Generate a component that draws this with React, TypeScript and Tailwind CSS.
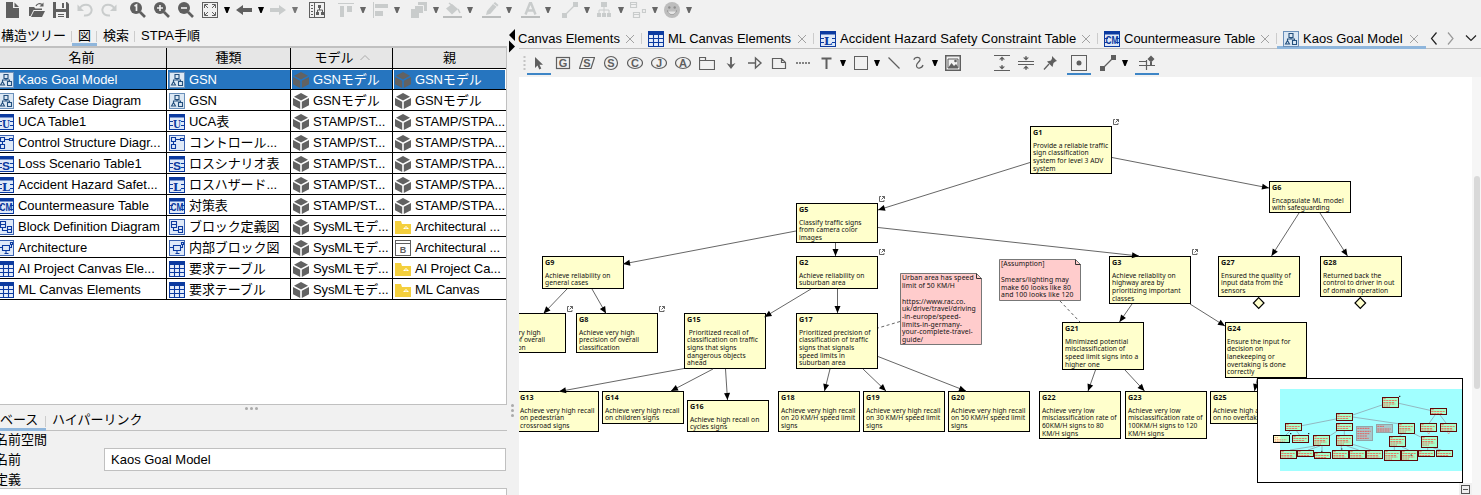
import React from "react";

const ICON = "#5f5f5f";
const OFF = "#c9cccc";
const BLUE = "#0b3aa0";

function Svg({ w = 16, h = 16, cls = "", children }: { w?: number; h?: number; cls?: string; children: React.ReactNode }) {
  return (
    <svg width={w} height={h} viewBox={`0 0 ${w} ${h}`} fill="none" className={`block shrink-0 ${cls}`}>
      {children}
    </svg>
  );
}

function Caret({ cls = "ml-1.5", color = "#666" }: { cls?: string; color?: string }) {
  return (
    <Svg w={6} h={16} cls={cls}>
      <path d="M0 5h6L3.6 11H2.4Z" fill={color} />
    </Svg>
  );
}

function Magnifier({ cls, children }: { cls: string; children: React.ReactNode }) {
  return (
    <Svg cls={cls}>
      <circle cx="6" cy="6" r="6" fill={ICON} />
      <path d="M10 10l5 5" stroke={ICON} strokeWidth="2.6" />
      {children}
    </Svg>
  );
}

function MainToolbar() {
  return (
    <div className="flex h-[23px] shrink-0 items-start pt-[2px]">
      <Svg cls="ml-[5px]">
        <path d="M1 0h7v6h6v10H1Z" fill={ICON} />
        <path d="M9.500 0.500L14 5H9.500Z" fill={ICON} />
      </Svg>
      <Svg cls="ml-2">
        <path d="M0 14V5h5l1.500 1.500H13V8H4.500L1.500 14Z" fill={ICON} />
        <path d="M5 9h11l-3 6H2Z" fill={ICON} />
        <path d="M7 4c1-2.500 4-3 6-1.500" stroke={ICON} strokeWidth="1.200" />
        <path d="M14.500 0.500V4.500H10.500Z" fill={ICON} />
      </Svg>
      <Svg cls="ml-2">
        <path d="M0 0h14l2 2v14H0Z" fill={ICON} />
        <path d="M3 0h10v7H3ZM3 10h10v6H3Z" fill="#f1f1f1" />
        <path d="M9 1h2v5H9ZM5 12h6v1H5ZM5 14h6v1H5Z" fill={ICON} />
      </Svg>
      <Svg cls="ml-2">
        <path d="M3 6C5 2 13 1 14.500 7c1 5-4 7-7.500 6.500" stroke={OFF} strokeWidth="2" />
        <path d="M0.500 2.500V9H7Z" fill={OFF} />
      </Svg>
      <Svg cls="ml-2">
        <path d="M13 6C11 2 3 1 1.500 7c-1 5 4 7 7.500 6.500" stroke={OFF} strokeWidth="2" />
        <path d="M15.500 2.500V9H9Z" fill={OFF} />
      </Svg>
      <Magnifier cls="ml-[13px]">
        <path d="M4.500 4L6.500 3v6" stroke="#f1f1f1" strokeWidth="1.700" />
      </Magnifier>
      <Magnifier cls="ml-2">
        <path d="M3 6h6M6 3v6" stroke="#f1f1f1" strokeWidth="1.600" />
      </Magnifier>
      <Magnifier cls="ml-2">
        <path d="M3 6h6" stroke="#f1f1f1" strokeWidth="1.600" />
      </Magnifier>
      <Svg cls="ml-2">
        <rect x="0.500" y="0.500" width="15" height="15" stroke={ICON} />
        <path d="M2.500 6V2.500H6M10 2.500h3.500V6M13.500 10v3.500H10M6 13.500H2.500V10M3 3l3 3M13 3l-3 3M13 13l-3-3M3 13l3-3" stroke={ICON} />
      </Svg>
      <Caret color="#000" />
      <Svg cls="ml-1.5">
        <path d="M0 8l7-5v3h9v4H7v3Z" fill={ICON} />
      </Svg>
      <Caret color="#000" />
      <Svg cls="ml-1.5">
        <path d="M16 8L9 3v3H0v4h9v3Z" fill={OFF} />
      </Svg>
      <Caret color="#777" />
      <Svg cls="ml-[11px]">
        <rect x="0.500" y="0.500" width="15" height="15" stroke={ICON} />
        <path d="M5.500 1v15" stroke={ICON} />
        <path d="M2 3.500h2M2 6.500h2M2 9.500h2M2 12.500h2" stroke={ICON} />
        <path d="M9 3h3v3H9ZM7 10h3v3H7ZM12 10h3v3h-3Z" fill={ICON} />
        <path d="M10.500 6v2M8.500 10V8h5v2" stroke={ICON} />
      </Svg>
      <Svg cls="ml-[13px]">
        <path d="M0 1h16v1H0ZM2 4h4v11H2ZM9 4h5v6H9Z" fill={OFF} />
      </Svg>
      <Caret />
      <Svg cls="ml-[7px]">
        <path d="M0 0h1v16H0ZM2 2h13v4H2ZM2 9h8v5H2Z" fill={OFF} />
      </Svg>
      <Caret cls="ml-[5px]" />
      <Svg cls="ml-[11px]">
        <path d="M7 0h9v9H7Z" fill={OFF} />
        <path d="M3.500 3.500h9v8h-9Z" fill={OFF} stroke="#f1f1f1" />
        <path d="M0 7h8v9H0Z" fill={OFF} />
      </Svg>
      <Caret />
      <Svg w={19} cls="ml-1">
        <path d="M3 6.500L9 2l6 5-6 5.500Z" fill={OFF} />
        <path d="M6 1l5 4M15 7l2 4" stroke={OFF} strokeWidth="1.600" />
        <path d="M0 14h19v2H0Z" fill="#bbbdbd" />
      </Svg>
      <Caret cls="ml-[5px]" />
      <Svg w={19} cls="ml-[9px]">
        <path d="M4 13l1-4 6-7 3.500 2.800-6 7Z" fill={OFF} />
        <path d="M11.500 1.500L13 0l3.500 3-1.200 1.500Z" fill={OFF} />
        <path d="M0 14h19v2H0Z" fill="#bbbdbd" />
      </Svg>
      <Caret cls="ml-[5px]" />
      <Svg w={19} cls="ml-[9px]">
        <path d="M4.500 12.500L9 1h1l4.500 11.500M6 8.500h7" stroke={OFF} strokeWidth="2.400" />
        <path d="M0 14h19v2H0Z" fill="#bbbdbd" />
      </Svg>
      <Caret cls="ml-[5px]" />
      <Svg cls="ml-[11px]">
        <path d="M11 0h5v5h-5ZM0 11h5v5H0Z" fill={OFF} />
        <path d="M3 13L13 3" stroke={OFF} strokeWidth="1.300" />
      </Svg>
      <Caret />
      <Svg cls="ml-1.5">
        <path d="M5 0h6v5H5ZM1 11h4v4H1ZM6 11h4v4H6ZM11 11h4v4h-4Z" fill={OFF} />
        <path d="M8 5v6M3 11V8h10v3" stroke={OFF} />
      </Svg>
      <Caret />
      <Svg cls="ml-1.5">
        <path d="M0.500 0.500h6v5h-6ZM0.500 2.500h6M3.500 10.500h6v5h-6ZM3.500 12.500h6M12.500 7.500h3v3h-3Z" stroke={OFF} strokeWidth="1.200" />
      </Svg>
      <Caret />
      <Svg cls="ml-1.5">
        <circle cx="8" cy="8" r="8" fill="#bdbdbd" />
        <path d="M3.500 8.500c1 5 8 5 9 0" stroke="#8e8e8e" />
        <path d="M4 9.500c1.500 3.500 6.500 3.500 8 0Z" fill="#e6e6e6" />
        <circle cx="5.300" cy="5.500" r="1.200" fill="#8e8e8e" />
        <circle cx="10.700" cy="5.500" r="1.200" fill="#8e8e8e" />
      </Svg>
      <Caret />
    </div>
  );
}

type Kind = "gsn" | "U" | "S" | "L" | "CM" | "ctrl" | "bdd" | "ibd" | "grid" | "cube" | "folder" | "block";

function TypeIcon({ kind }: { kind: Kind }) {
  if (kind === "gsn")
    return (
      <Svg>
        <rect x="0.500" y="0.500" width="15" height="15" fill="#dce8f4" stroke="#6b90ba" />
        <path d="M6 2.500h4v4H6ZM2.500 13l2-3.500 2 3.500ZM9.500 9.500h4v4h-4ZM8 6.500v1.500M4.500 9.500V8h7v1.500" stroke="#234f7d" strokeWidth="1.100" />
      </Svg>
    );
  if (kind === "U" || kind === "S" || kind === "L" || kind === "CM")
    return (
      <Svg>
        <rect width="16" height="16" fill="#dfe9f8" />
        <path d="M0 0h16v3.500H0Z" fill={BLUE} />
        <path d="M0.500 0v16M15.500 0v16M0 15.500h16M1 7.500h3M12 7.500h3M1 11.500h3M12 11.500h3" stroke={BLUE} />
        {kind === "CM" ? (
          <text x="1.500" y="13" fill={BLUE} fontSize="10" textLength="13" lengthAdjust="spacingAndGlyphs" fontWeight="bold" fontFamily="Liberation Sans">
            CM
          </text>
        ) : (
          <text x="8" y="13.500" textAnchor="middle" fill={BLUE} fontSize="10.500" textLength="8" lengthAdjust="spacingAndGlyphs" fontWeight="bold" fontFamily={kind === "S" ? "Liberation Sans" : "DejaVu Serif"}>
            {kind}
          </text>
        )}
      </Svg>
    );
  if (kind === "ctrl")
    return (
      <Svg>
        <rect x="0.500" y="0.500" width="15" height="15" fill="#dfe9f8" stroke="#3b62b0" />
        <path d="M2.500 2.500h4v4h-4ZM11.500 3.500h3v2h-3ZM2.500 9.500h4v4h-4ZM6.500 4.500h5M4.500 6.500v3" stroke={BLUE} strokeWidth="1.100" />
      </Svg>
    );
  if (kind === "bdd")
    return (
      <Svg>
        <rect x="0.500" y="0.500" width="15" height="15" fill="#dfe9f8" stroke="#3b62b0" />
        <path d="M2.500 2.500h5v6h-5ZM2.500 5.500h5M9.500 7.500h4v6h-4ZM9.500 10.500h4M4.500 8.500v3h5" stroke={BLUE} strokeWidth="1.100" />
      </Svg>
    );
  if (kind === "ibd")
    return (
      <Svg>
        <rect x="0.500" y="0.500" width="15" height="15" fill="#dfe9f8" stroke="#3b62b0" />
        <path d="M4.500 5.500h7v5h-7ZM1 7.500h3.500M11.500 7.500h2V4M12.500 2.500h2v2h-2ZM8 10.500v3M6.500 13.500h4" stroke={BLUE} strokeWidth="1.100" />
      </Svg>
    );
  if (kind === "grid")
    return (
      <Svg>
        <rect width="16" height="16" fill="#e6eefb" />
        <path d="M0 0h16v4H0Z" fill={BLUE} />
        <path d="M0.500 0v16M5.500 4v12M10.500 4v12M15.500 0v16M0 7.500h16M0 11.500h16M0 15.500h16" stroke={BLUE} strokeWidth="1.100" />
      </Svg>
    );
  if (kind === "cube")
    return (
      <Svg>
        <path d="M8 0l7 3.700L8 7.400 1 3.700ZM0 5l7.200 3.700V16L0 12.200ZM16 5L8.800 8.700V16L16 12.200Z" fill="#626262" />
      </Svg>
    );
  if (kind === "folder")
    return (
      <Svg>
        <path d="M0 2h6l1 3h9v10H0Z" fill="#f4cf3c" />
        <path d="M8 10l3-3 3 3Z" fill="#fff" />
        <path d="M9.800 9.200h2.400L11 8Z" fill="#f4cf3c" />
      </Svg>
    );
  return (
    <Svg>
      <rect x="0.500" y="0.500" width="15" height="15" fill="#fff" stroke={ICON} />
      <path d="M0 3.500h16" stroke={ICON} />
      <text x="8" y="13" textAnchor="middle" fill={ICON} fontSize="9" fontWeight="bold" fontFamily="Liberation Sans">B</text>
    </Svg>
  );
}

const rows: [Kind, string, string, string, Kind, string][] = [
  ["gsn", "Kaos Goal Model", "GSN", "GSNモデル", "cube", "GSNモデル"],
  ["gsn", "Safety Case Diagram", "GSN", "GSNモデル", "cube", "GSNモデル"],
  ["U", "UCA Table1", "UCA表", "STAMP/ST...", "cube", "STAMP/STPA..."],
  ["ctrl", "Control Structure Diagr...", "コントロール...", "STAMP/ST...", "cube", "STAMP/STPA..."],
  ["S", "Loss Scenario Table1", "ロスシナリオ表", "STAMP/ST...", "cube", "STAMP/STPA..."],
  ["L", "Accident Hazard Safet...", "ロスハザード...", "STAMP/ST...", "cube", "STAMP/STPA..."],
  ["CM", "Countermeasure Table", "対策表", "STAMP/ST...", "cube", "STAMP/STPA..."],
  ["bdd", "Block Definition Diagram", "ブロック定義図", "SysMLモデ...", "folder", "Architectural ..."],
  ["ibd", "Architecture", "内部ブロック図", "SysMLモデ...", "block", "Architectural ..."],
  ["grid", "AI Project Canvas Ele...", "要求テーブル", "SysMLモデ...", "folder", "AI Project Ca..."],
  ["grid", "ML Canvas Elements", "要求テーブル", "SysMLモデ...", "folder", "ML Canvas"],
];

function Cell({ icon, text, selected, first }: { icon: Kind; text: string; selected: boolean; first?: boolean }) {
  return (
    <div className={`flex min-w-0 pt-px ${first ? "" : "pl-px"}`}>
      <div className={`flex min-w-0 flex-1 items-center gap-1 ${selected ? "bg-[#2675bf] text-white" : ""}`}>
        <div className={`shrink-0 ${first ? "-ml-[2px]" : "ml-px"}`}>
          <TypeIcon kind={icon} />
        </div>
        <span className={`leading-[18px] whitespace-nowrap ${first ? "tracking-[-0.02px]" : "tracking-[-0.1px]"}`}>{text}</span>
      </div>
    </div>
  );
}

const GRID = "grid shrink-0 grid-cols-[166px_123px_101px_113px] gap-x-px";

function Divider({ cls = "" }: { cls?: string }) {
  return <span className={`h-[11px] w-px shrink-0 bg-[#ccc] ${cls}`} />;
}

function LeftPanel() {
  return (
    <div className="flex w-[507px] shrink-0 flex-col">
      <div className="flex h-[24px] shrink-0 items-stretch border-b border-[#c0c0c0]">
        <span className="w-[71px] pt-[4px] pl-px leading-[18px] whitespace-nowrap">構造ツリー</span>
        <Divider cls="mt-[8px]" />
        <span className="flex w-[25px] justify-center border-b-[3px] border-[#8fb6dc] pt-[4px] leading-[18px]">図</span>
        <Divider cls="-ml-px mt-[8px]" />
        <span className="pt-[4px] pl-[6px] leading-[18px]">検索</span>
        <Divider cls="mt-[8px] ml-[5px]" />
        <span className="pt-[4px] pl-[6px] leading-[18px]">STPA手順</span>
      </div>
      <div className="flex h-[358px] shrink-0 flex-col border-t border-r border-b border-[#c0c0c0] bg-white">
        <div className={`${GRID} h-[21px] border-b border-black bg-black text-center leading-[20px]`}>
          <div className="bg-[#e6e6e6] pr-[3px]">名前</div>
          <div className="bg-[#e6e6e6]">種類</div>
          <div className="flex items-center justify-center gap-1.5 bg-[#e6e6e6] pl-px">
            モデル
            <Svg w={10} h={10}>
              <path d="M0.500 7L5 2.500 9.500 7" stroke="#aaa" />
            </Svg>
          </div>
          <div className="bg-[#e6e6e6]">親</div>
        </div>
        {rows.map(([kind, name, type, model, pkind, parent], i) => (
          <div key={name} className={`${GRID} h-[21px] border-b border-black bg-black`}>
            <div className="grid bg-white"><Cell first icon={kind} text={name} selected={i === 0} /></div>
            <div className="grid bg-white"><Cell icon={kind} text={type} selected={i === 0} /></div>
            <div className="grid bg-white"><Cell icon="cube" text={model} selected={i === 0} /></div>
            <div className="grid bg-white pr-px"><Cell icon={pkind} text={parent} selected={i === 0} /></div>
          </div>
        ))}
      </div>
      <div className="flex h-[7px] shrink-0 items-center justify-center gap-[2px] pr-[5px]">
        <span className="size-[3px] rounded-full bg-[#aaa]" />
        <span className="size-[3px] rounded-full bg-[#aaa]" />
        <span className="size-[3px] rounded-full bg-[#aaa]" />
      </div>
      <div className="flex h-[19px] shrink-0 border-b border-[#c0c0c0]">
        <span className="-mb-px flex w-[46px] justify-between border-b-[3px] border-[#8fb6dc] leading-[16px] whitespace-nowrap">
          ベース
          <Divider cls="mt-[4px]" />
        </span>
        <span className="pl-[6px] leading-[16px]">ハイパーリンク</span>
      </div>
      <div className="flex flex-1 flex-col">
        <span className="-ml-[5px] h-[17px] pt-px leading-[16px]">名前空間</span>
        <div className="flex h-[23px] items-center">
          <span className="-ml-[5px] w-[109px]">名前</span>
          <div className="mr-[1px] flex h-[23px] flex-1 items-center border border-[#c0c0c0] bg-white pl-[6px]">Kaos Goal Model</div>
        </div>
        <span className="-ml-[5px] h-[17px] pt-px leading-[16px]">定義</span>
        <div className="flex-1 border-t border-r border-[#c0c0c0] bg-white" />
      </div>
    </div>
  );
}

function Close() {
  return (
    <Svg w={8} h={8} cls="ml-[6px]">
      <path d="M0 0l8 8M8 0L0 8" stroke="#999" strokeWidth="0.900" />
    </Svg>
  );
}

function Tab({ icon, label, width }: { icon: Kind; label: string; width: string }) {
  return (
    <>
      <Divider cls="ml-[7px]" />
      <div className="ml-[6px] shrink-0"><TypeIcon kind={icon} /></div>
      <span className={`ml-1 shrink-0 whitespace-nowrap ${width}`}>{label}</span>
      <Close />
    </>
  );
}

function DocTabs() {
  return (
    <div className="flex h-[26px] shrink-0 border-b border-[#c0c0c0]">
      <div className="flex w-[758px] shrink-0 items-center pt-[6px]">
        <span className="-ml-px w-[102px] shrink-0 whitespace-nowrap">Canvas Elements</span>
        <Close />
        <Tab icon="grid" label="ML Canvas Elements" width="w-[124px]" />
        <Tab icon="L" label="Accident Hazard Safety Constraint Table" width="w-[236px] tracking-[0.08px]" />
        <Tab icon="CM" label="Countermeasure Table" width="w-[131px]" />
        <Divider cls="ml-[7px]" />
      </div>
      <div className="-mb-px flex w-[149px] items-center border-b-[3px] border-[#8fb6dc] pt-[8px] pl-[6px]">
        <TypeIcon kind="gsn" />
        <span className="ml-1 w-[101px] shrink-0 whitespace-nowrap">Kaos Goal Model</span>
        <Close />
      </div>
      <Svg w={50} h={16} cls="mt-[8px] ml-[4px]">
        <path d="M6.500 1.500L1.500 7.500l5 6M36 4.500l5 5 5-5" stroke="#222" strokeWidth="1.200" />
        <path d="M18 1.500l5 6-5 6" stroke="#999" strokeWidth="1.200" />
      </Svg>
    </div>
  );
}

function Glyph({ x = 8, children }: { x?: number; children: string }) {
  return (
    <text x={x} y="12" textAnchor="middle" fill={ICON} fontSize="11" fontWeight="bold" fontFamily="Liberation Sans">
      {children}
    </text>
  );
}

function DiagramToolbar() {
  return (
    <div className="flex h-[28px] shrink-0 items-start pt-[6px]">
      <Svg w={3} cls="ml-[4px]">
        <path d="M1.500 1v15" stroke="#c4c4c4" strokeWidth="2" strokeDasharray="2 2" />
      </Svg>
      <div className="ml-px flex h-[20px] w-6 justify-center border-b-2 border-[#3d85c6]">
        <Svg>
          <path d="M4 2v11l2.500-2.500 1.800 4 2-1-1.800-3.800H12Z" fill={ICON} />
        </Svg>
      </div>
      <Svg cls="ml-[4px]"><rect x="1.500" y="2.500" width="13" height="11" stroke={ICON} strokeWidth="1.200" /><Glyph>G</Glyph></Svg>
      <Svg cls="ml-[8px]"><path d="M4 2.500h11.500L12 13.500H0.500Z" stroke={ICON} strokeWidth="1.200" /><Glyph>S</Glyph></Svg>
      <Svg cls="ml-[8px]"><circle cx="8" cy="8" r="6.500" stroke={ICON} strokeWidth="1.200" /><Glyph>S</Glyph></Svg>
      <Svg cls="ml-[8px]"><ellipse cx="8" cy="8" rx="7.500" ry="5.500" stroke={ICON} strokeWidth="1.200" /><Glyph>C</Glyph></Svg>
      <Svg cls="ml-[8px]"><ellipse cx="8" cy="8" rx="7.500" ry="5.500" stroke={ICON} strokeWidth="1.200" /><Glyph>J</Glyph></Svg>
      <Svg cls="ml-[8px]"><ellipse cx="8" cy="8" rx="7.500" ry="5.500" stroke={ICON} strokeWidth="1.200" /><Glyph>A</Glyph></Svg>
      <Svg cls="ml-[8px]"><path d="M0.500 14.500v-12h6v3h9v9ZM0.500 5.500h6" stroke={ICON} strokeWidth="1.200" /></Svg>
      <Svg cls="ml-[8px]"><path d="M8 2v9" stroke={ICON} strokeWidth="1.800" /><path d="M3.500 8L8 10l4.500-2L8 14Z" fill={ICON} /></Svg>
      <Svg cls="ml-[8px]"><path d="M1 8h8M8.500 3l5.500 5-5.500 5Z" stroke={ICON} strokeWidth="1.400" /></Svg>
      <Svg cls="ml-[8px]"><path d="M1.500 3.500h9l4 4v6h-13ZM10.500 3.500v4h4" stroke={ICON} strokeWidth="1.200" /></Svg>
      <Svg cls="ml-[8px]"><path d="M1 8h15" stroke={ICON} strokeWidth="1.500" strokeDasharray="2 1" /></Svg>
      <Svg cls="ml-[8px]"><path d="M2.500 3.500h10M7.500 3v11" stroke={ICON} strokeWidth="2" /></Svg>
      <Caret cls="ml-[5px]" color="#000" />
      <Svg cls="ml-[8px]"><rect x="0.500" y="1.500" width="13" height="13" stroke={ICON} /></Svg>
      <Caret cls="ml-[4px]" color="#000" />
      <Svg cls="ml-[6px]"><path d="M2.500 2.500l11 11" stroke={ICON} strokeWidth="1.200" /></Svg>
      <Svg cls="ml-[9px]"><path d="M3 5c0-3.500 7-3.500 6 0-0.500 2-3.500 3-3.500 5.500 0 4 5.500 3 6.500-0.500" stroke={ICON} strokeWidth="1.200" /></Svg>
      <Caret cls="ml-[5px]" color="#000" />
      <Svg cls="ml-[7px]">
        <rect x="0.750" y="0.750" width="14.500" height="14.500" stroke={ICON} strokeWidth="1.500" />
        <path d="M3 13V4h10v9Z" stroke={ICON} />
        <path d="M3 13l3.500-5L9 11l2-2 2 3v1Z" fill={ICON} /><circle cx="10.500" cy="6" r="1.300" fill={ICON} />
      </Svg>
      <Svg cls="ml-[33px]">
        <path d="M0 0.500h16M0 15.500h16M8 3v3M8 10v3" stroke={ICON} strokeWidth="1.200" />
        <path d="M5 4.500L8 1.500l3 3ZM5 11.500l3 3 3-3Z" fill={ICON} />
      </Svg>
      <Svg cls="ml-[8px]">
        <path d="M0 6.500h16M0 9.500h16M8 1v2M8 13v2" stroke={ICON} strokeWidth="1.200" />
        <path d="M5 2.500h6L8 5.500ZM5 13.500h6L8 10.500Z" fill={ICON} />
      </Svg>
      <Svg cls="ml-[8px]">
        <path d="M10 1l5 5-1.500 0.500-2 1.500-1 4-5.500-5.500 4-1 1-2Z" fill={ICON} />
        <path d="M7 9l-5 5.500" stroke={ICON} strokeWidth="1.300" />
      </Svg>
      <div className="ml-[9px] flex h-[20px] w-6 justify-center border-b-2 border-[#3d85c6]">
        <Svg><rect x="0.500" y="0.500" width="15" height="15" stroke={ICON} /><circle cx="8" cy="8" r="2.500" fill={ICON} /></Svg>
      </div>
      <Svg cls="ml-[9px]"><path d="M11 0h5v5h-5ZM0 11h5v5H0Z" fill={ICON} /><path d="M3 13L13 3" stroke={ICON} strokeWidth="1.300" /></Svg>
      <Caret cls="ml-[6px]" color="#000" />
      <div className="ml-[7px] flex h-[20px] w-6 justify-center border-b-2 border-[#3d85c6]">
        <Svg><path d="M0 6.500h7M0 10.500h7M7.500 5v10M8 10.500h8" stroke={ICON} strokeWidth="1.200" /><path d="M12 0.500l3.500 3.500L12 7.500 8.500 4ZM11 7h2v3h-2Z" fill={ICON} /></Svg>
      </div>
    </div>
  );
}

/* Canvas coordinates share the window origin; the viewport group is shifted by (-519, -77). */
type GoalNode = { id: string; x: number; y: number; h: number; lines: string[]; link?: boolean; dx?: number };
const nodes: GoalNode[] = [
  { id: "G1", x: 1030, y: 126, h: 48, link: true, lines: ["Provide a reliable traffic", "sign classification", "system for level 3 ADV", "system"] },
  { id: "G6", x: 1269, y: 181, h: 32, lines: ["Encapsulate ML model", "with safeguarding"] },
  { id: "G5", x: 796, y: 203, h: 40, link: true, lines: ["Classify traffic signs", "from camera color", "images"] },
  { id: "G9", x: 542, y: 256, h: 33, lines: ["Achieve reliability on", "general cases"] },
  { id: "G2", x: 796, y: 256, h: 33, link: true, lines: ["Achieve reliability on", "suburban area"] },
  { id: "G3", x: 1109, y: 256, h: 48, link: true, lines: ["Achieve reliablity on", "highway area by", "prioritizing important", "classes"] },
  { id: "G27", x: 1218, y: 256, h: 41, lines: ["Ensured the quality of", "input data from the", "sensors"] },
  { id: "G28", x: 1320, y: 256, h: 41, lines: ["Returned back the", "control to driver in out", "of domain operation"] },
  { id: "G7", x: 484, y: 313, h: 40, link: true, dx: -2, lines: ["Achieve very high", "precision of overall", "classification"] },
  { id: "G8", x: 576, y: 313, h: 40, link: true, lines: ["Achieve very high", "precision of overall", "classification"] },
  { id: "G15", x: 684, y: 313, h: 56, lines: ["\u00a0Prioritized recall of", "classification on traffic", "signs that signs", "dangerous objects", "ahead"] },
  { id: "G17", x: 796, y: 313, h: 56, lines: ["Prioritized precision of", "classification of traffic", "signs that signals", "speed limits in", "suburban area"] },
  { id: "G21", x: 1062, y: 322, h: 48, lines: ["Minimized potential", "misclassification of", "speed limit signs into a", "higher one"] },
  { id: "G24", x: 1225, y: 322, h: 56, dx: -1, lines: ["Ensure the input for", "decision on", "lanekeeping or", "overtaking is done", "correctly"] },
  { id: "G13", x: 517, y: 391, h: 41, lines: ["Achieve very high recall", "on pedestrian", "crossroad signs"] },
  { id: "G14", x: 602, y: 391, h: 33, lines: ["Achieve very high recall", "on children signs"] },
  { id: "G16", x: 687, y: 400, h: 32, lines: ["Achieve high recall on", "cycles signs"] },
  { id: "G18", x: 778, y: 391, h: 41, lines: ["Achieve very high recall", "on 20 KM/H speed limit", "signs"] },
  { id: "G19", x: 863, y: 391, h: 41, lines: ["Achieve very high recall", "on 30 KM/H speed limit", "signs"] },
  { id: "G20", x: 948, y: 391, h: 41, lines: ["Achieve very high recall", "on 50 KM/H speed limit", "signs"] },
  { id: "G22", x: 1039, y: 391, h: 48, lines: ["Achieve very low", "misclassification rate of", "60KM/H signs to 80", "KM/H signs"] },
  { id: "G23", x: 1125, y: 391, h: 48, lines: ["Achieve very low", "misclassification rate of", "100KM/H signs to 120", "KM/H signs"] },
  { id: "G25", x: 1210, y: 391, h: 33, lines: ["Achieve high accuracy", "on no overtaking"] },
];

const notes = [
  { x: 900, y: 273, h: 72, lines: ["Urban area has speed", "limit of 50 KM/H", "\u00a0", "https://www.rac.co.", "uk/drive/travel/driving", "-in-europe/speed-", "limits-in-germany-", "your-complete-travel-", "guide/"] },
  { x: 999, y: 259, h: 42, lines: ["[Assumption]", "\u00a0", "Smears/lighting may", "make 60 looks like 80", "and 100 looks like 120"] },
];

const edges = [
  [1030, 162.5, 878, 210], [1112, 157.5, 1269, 188], [796, 231, 623, 264], [835.5, 243, 835.5, 256],
  [878, 227.5, 1139, 256], [567, 289, 543.5, 313.5], [592, 289, 606, 313.5], [811, 289, 764.5, 317],
  [837.5, 289, 837.5, 313], [684, 368.5, 559, 391.5], [713, 369, 671, 391], [725.5, 369, 727.5, 400],
  [830, 369, 824.5, 391], [863, 369, 886, 391], [878, 356.5, 966, 391], [1132, 304, 1119.5, 322],
  [1190, 304, 1225, 326], [1095.5, 370, 1088, 391], [1125, 370, 1144.5, 391], [1299, 213, 1271.5, 256],
  [1320, 213, 1347.5, 256], [1257.500, 378, 1254.500, 391],
];

const mapBoxes = [
  [546, 96, 33], [408, 144, 24], [690, 129, 21], [255, 174, 24], [408, 174, 24], [594, 174, 33], [660, 174, 27], [720, 174, 27],
  [276, 210, 24], [339, 210, 33], [408, 210, 33], [567, 213, 33], [663, 213, 36], [240, 255, 27], [291, 255, 21],
  [342, 261, 21], [396, 255, 27], [447, 255, 27], [498, 255, 27], [552, 255, 33], [603, 255, 33], [654, 255, 21], [708, 255, 21],
];

function MiniMap() {
  return (
    <svg width="204" height="103" viewBox="174 42 612 309" className="block">
      <rect x="240" y="72" width="547" height="246" fill="#a1ffff" />
      <path d="M546 120L458 150M597 115L690 136M408 162L306 182M458 156L594 176M705 150L688 174M720 150L738 174M270 198l-14 14M290 198l10 14M412 198l-22 14M433 198v12M605 207l-8 8M640 205l24 12M345 243l-75 12M360 243l-36 12M366 243v18M424 243v12M440 243l36 12M458 238l56 17M583 246v9M606 246l20 9M683 249v6M700 249l24 6" stroke="#8fa9b4" strokeWidth="2.500" />
      <rect x="469.500" y="184.500" width="48" height="42" fill="#a7c9cc" stroke="#93a5a8" strokeWidth="3" />
      <rect x="529.500" y="178.500" width="48" height="24" fill="#a7c9cc" stroke="#93a5a8" strokeWidth="3" />
      <path d="M472 190h36M472 199h40M472 206h36M472 213h30M472 220h34M532 184h20M532 192h40M532 198h38" stroke="#e0605f" strokeWidth="3" strokeDasharray="6 1.500" />
      <rect x="220.500" y="211.500" width="48" height="21" fill="#ffffcc" stroke="#000" strokeWidth="3" />
      <rect x="241" y="213" width="26" height="18" fill="#a6ffca" />
      <path d="M224 218h10M224 224h36M224 229h30" stroke="#ef7a6a" strokeWidth="2" strokeDasharray="5 2" />
      {mapBoxes.map(([x, y, h]) => (
        <g key={`${x}-${y}`}>
          <rect x={x + 1.5} y={y + 1.5} width="48" height={h - 3} fill="#a6ffca" stroke="#5f0808" strokeWidth="3" />
          <path d={`M${x + 4} ${y + 5}h7M${x + 4} ${y + 10.5}h40M${x + 4} ${y + 16.5}h34${h > 25 ? `M${x + 4} ${y + 21}h36` : ""}${h > 30 ? `M${x + 4} ${y + 27}h20` : ""}`} stroke="#f0614f" strokeWidth="2.400" strokeDasharray="7 1.500" />
        </g>
      ))}
      <path d="M597 94h4M270 206h4M324 206h4M424 252h3M364 259h3M632 270h3" stroke="#000" strokeWidth="3" />
      <path d="M683 202l3 5 3-5M743 202l3 5 3-5" stroke="#ef7a6a" strokeWidth="2" fill="none" />
    </svg>
  );
}

function arrowHead([x1, y1, x2, y2]: number[]) {
  const len = Math.hypot(x2 - x1, y2 - y1);
  const ux = (x2 - x1) / len;
  const uy = (y2 - y1) / len;
  const bx = x2 - ux * 7;
  const by = y2 - uy * 7;
  return `${x2},${y2} ${bx - uy * 3},${by + ux * 3} ${bx + uy * 3},${by - ux * 3}`;
}

const BODY = "font-['Noto_Sans','Open_Sans',sans-serif] leading-[7.7px] whitespace-nowrap text-[#111]";

function Canvas() {
  return (
    <div className="relative flex-1 overflow-hidden bg-white">
      <div className="absolute -top-[77px] -left-[519px] h-[495px] w-[1481px]">
        {nodes.map((n) => (
          <div key={n.id} className={`absolute w-[82px] border border-black bg-[#ffffcc] text-[6.700px] tracking-[0.04px] ${BODY}`} style={{ left: n.x, top: n.y, height: n.h, paddingLeft: 2 + (n.dx ?? 0) }}>
            <div className="pt-[2px] pb-[4.900px] text-[7.200px] font-bold">{n.id}</div>
            {n.lines.map((l) => <div key={l}>{l}</div>)}
          </div>
        ))}
        {notes.map((n) => (
          <div key={n.x} className={`absolute w-[82px] text-[6.800px] tracking-[0.09px] ${BODY}`} style={{ left: n.x, top: n.y, height: n.h }}>
            <svg width="82" height={n.h} className="absolute inset-0" fill="none">
              <path d={`M0.500 0.500H76.500L81.500 5.500V${n.h - 0.5}H0.500Z`} fill="#ffcccc" stroke="#777" />
              <path d="M76.500 0.500V5.500H81.500" stroke="#333" />
            </svg>
            <div className="relative pt-[1.400px] pl-[2px]">
              {n.lines.map((l, i) => <div key={i}>{l}</div>)}
            </div>
          </div>
        ))}
        <svg width="1481" height="495" className="absolute inset-0" fill="none">
          {edges.map((e, i) => (
            <g key={i}>
              <path d={`M${e[0]} ${e[1]}L${e[2]} ${e[3]}`} stroke="#555" strokeWidth="0.900" />
              <polygon points={arrowHead(e)} fill="#000" />
            </g>
          ))}
          <path d="M900 321.500L878 328M1060 301l20 21" stroke="#555" strokeWidth="0.900" strokeDasharray="3 2.500" />
          {[1258.7, 1360.3].map((x) => (
            <path key={x} d={`M${x} 297.700l5.300 5.300-5.300 5.300-5.300-5.300Z`} fill="#ffffcc" stroke="#000" strokeWidth="1.200" />
          ))}
          {nodes.filter((n) => n.link).map((n) => (
            <path key={n.id} transform={`translate(${n.x + 83} ${n.y - 7})`} d="M2 0.500H0.500v5h4.500V4M3 0.500h2.500V3M2.500 3.500l3-3" stroke="#555" strokeWidth="0.900" />
          ))}
        </svg>
        <div className="absolute top-[378px] left-[1257px] h-[105px] w-[206px] border border-black bg-white">
          <MiniMap />
        </div>
        <div className="absolute top-[483px] left-[1459px] h-3 w-[13px] bg-[#f0f0f0]">
          <Svg w={13} h={12}>
            <rect x="2.500" y="2.500" width="8" height="8" stroke="#555" />
            <path d="M4 6.500h5" stroke="#555" />
          </Svg>
        </div>
      </div>
    </div>
  );
}

export default function App() {
  return (
    <div className="flex h-[495px] w-[1481px] flex-col overflow-hidden bg-[#f1f1f1] font-['Liberation_Sans','Noto_Sans_CJK_JP',sans-serif] text-[13px] leading-[16px] text-black">
      <MainToolbar />
      <div className="flex min-h-0 flex-1">
        <LeftPanel />
        <div className="flex w-3 shrink-0 flex-col">
          <Svg w={12} h={32}>
            <path d="M8 6v12l-6-6ZM2 17.500v12l6-6Z" fill="#000" />
          </Svg>
          <div className="mt-[349px] ml-[4px] flex flex-col gap-[2px]">
            <span className="size-[3px] rounded-full bg-[#aaa]" />
            <span className="size-[3px] rounded-full bg-[#aaa]" />
            <span className="size-[3px] rounded-full bg-[#aaa]" />
          </div>
        </div>
        <div className="flex min-w-0 flex-1 flex-col">
          <DocTabs />
          <DiagramToolbar />
          <div className="flex min-h-0 flex-1">
            <Canvas />
            <div className="flex w-[9px] shrink-0 flex-col items-center bg-[#f6f6f6] pt-[99px]">
              <div className="h-[213px] w-[6px] rounded-full bg-[#d9d9d9]" />
            </div>
          </div>
        </div>
      </div>
    </div>
  );
}
